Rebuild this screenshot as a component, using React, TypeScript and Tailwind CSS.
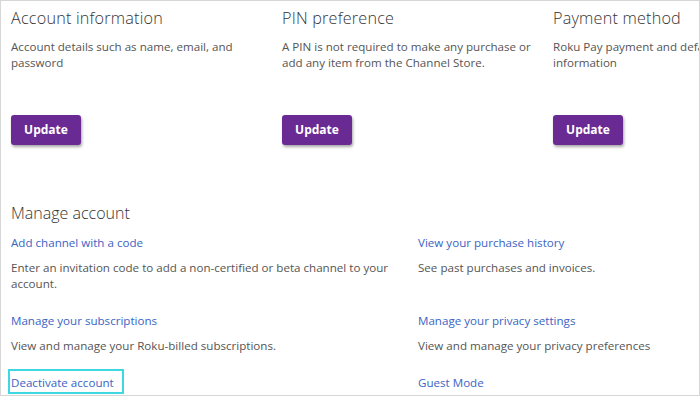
import React from "react";

const font = { fontFamily: '"Open Sans", "Liberation Sans", sans-serif' };

function Top({ title, desc }: { title: string; desc: React.ReactNode }) {
  return (
    <div className="w-[271px] shrink-0 flex flex-col">
      <h2 className="text-[16.2px] leading-[22px] font-light text-[#333] tracking-[0.2px]">{title}</h2>
      <p className="mt-[10px] text-[11.6px] leading-[16px] text-[#555] h-[32px] pr-3">{desc}</p>
      <div className="mt-[44px]">
        <button className="w-[70px] h-[30px] rounded-[3px] bg-[#6a2a94] text-white text-[12px] font-bold shadow-[1px_2px_3px_rgba(0,0,0,0.35)]">
          Update
        </button>
      </div>
    </div>
  );
}

function Item({ link, desc, boxed }: { link: string; desc?: React.ReactNode; boxed?: boolean }) {
  return (
    <div className="flex flex-col">
      <a
        className={
          boxed
            ? "self-start -ml-[3px] -mt-[6px] -mb-[3px] pl-[1px] pr-[8px] pt-[4px] pb-[1px] border-2 border-[#3fd8e2] text-[11.6px] leading-[16px] text-[#3a64c4]"
            : "self-start text-[11.6px] leading-[16px] text-[#3a64c4]"
        }
      >
        {link}
      </a>
      {desc && <p className="mt-[9px] text-[11.6px] leading-[16px] text-[#555] pr-3">{desc}</p>}
    </div>
  );
}

export default function App() {
  return (
    <div className="w-[700px] h-[396px] bg-white border border-[#d6d6d6] overflow-hidden" style={font}>
      <div className="flex pl-[10px] pt-[6px]">
        <Top title="Account information" desc="Account details such as name, email, and password" />
        <Top title="PIN preference" desc="A PIN is not required to make any purchase or add any item from the Channel Store." />
        <Top title="Payment method" desc="Roku Pay payment and default billing information" />
      </div>
      <div className="pl-[10px] mt-[57px]">
        <h2 className="text-[16px] leading-[22px] font-light text-[#333]">Manage account</h2>
        <div className="grid grid-cols-[407px_1fr] mt-[11px] gap-y-[21px]">
          <Item link="Add channel with a code" desc="Enter an invitation code to add a non-certified or beta channel to your account." />
          <Item link="View your purchase history" desc="See past purchases and invoices." />
          <Item link="Manage your subscriptions" desc="View and manage your Roku-billed subscriptions." />
          <Item link="Manage your privacy settings" desc="View and manage your privacy preferences" />
          <Item link="Deactivate account" boxed />
          <Item link="Guest Mode" />
        </div>
      </div>
    </div>
  );
}
